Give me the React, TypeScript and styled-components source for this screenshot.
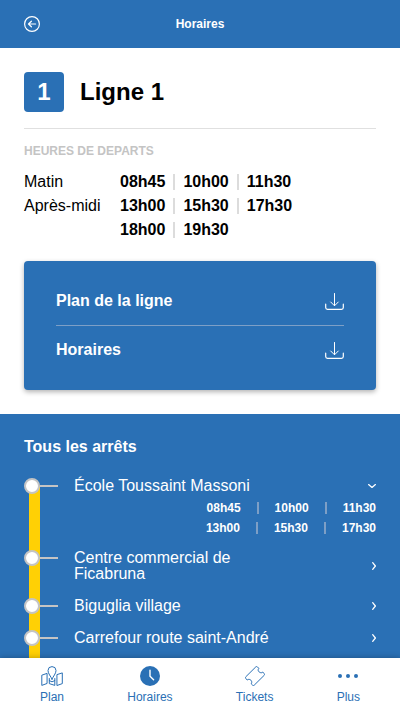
import React, { useState } from "react";
import styled, { createGlobalStyle } from "styled-components";

const blue = "#2a70b5";
const grey = "#c4c4c4";

const GlobalStyle = createGlobalStyle`
  *, *::before, *::after { box-sizing: border-box; }
  body { margin: 0; background: #fff; color: #000; font: 16px/24px "Liberation Sans", Arial, sans-serif; }
  h1, h2, ul, dl, dd { margin: 0; padding: 0; }
  ul { list-style: none; }
  button { margin: 0; padding: 0; border: 0; background: none; color: inherit; font: inherit; text-align: left; cursor: pointer; }
  a { color: inherit; text-decoration: none; }
  svg { display: block; flex: none; }
`;

const Screen = styled.div`
  display: flex;
  flex-direction: column;
  height: 100vh;
`;

const Header = styled.header`
  display: grid;
  grid-template-columns: 1fr auto 1fr;
  align-items: center;
  height: 48px;
  padding: 0 24px;
  flex: none;
  background: ${blue};
  color: #fff;
`;

const HeaderTitle = styled.span`
  font-size: 12px;
  font-weight: 700;
`;

const BackButton = styled.button`
  justify-self: start;
`;

const Content = styled.main`
  flex: 1;
  min-height: 0;
  overflow-y: auto;
  scrollbar-width: none;
`;

const Summary = styled.section`
  padding: 24px;
`;

const LineHeading = styled.div`
  display: flex;
  align-items: center;
  gap: 16px;
  padding-bottom: 16px;
  border-bottom: 1px solid #e0e0e0;
`;

const LineBadge = styled.span`
  display: grid;
  place-items: center;
  width: 40px;
  height: 40px;
  border-radius: 4px;
  background: ${blue};
  color: #fff;
  font-size: 24px;
  font-weight: 700;
`;

const LineName = styled.h1`
  font-size: 24px;
  line-height: 40px;
`;

const Caption = styled.h2`
  margin: 14px 0 11px;
  color: ${grey};
  font-size: 12px;
  line-height: 16px;
`;

const Departures = styled.dl`
  display: grid;
  grid-template-columns: 96px 1fr;
`;

const TimeRow = styled.ul<{ $compact?: boolean }>`
  display: flex;
  justify-content: ${(p) => (p.$compact ? "flex-end" : "flex-start")};
  font-size: ${(p) => (p.$compact ? 12 : 16)}px;
  line-height: ${(p) => (p.$compact ? 20 : 24)}px;
  font-weight: 700;

  li {
    display: flex;
    align-items: center;
  }
  li + li::before {
    content: "";
    width: 2px;
    height: ${(p) => (p.$compact ? 12 : 16)}px;
    margin: 0 ${(p) => (p.$compact ? 16 : 8)}px;
    background: ${(p) => (p.$compact ? "#7d9fc6" : "#dcdcdc")};
  }
`;

const DownloadCard = styled.ul`
  margin-top: 19px;
  padding: 16px 32px;
  border-radius: 4px;
  background: ${blue};
  color: #fff;
  box-shadow: 0 2px 5px rgba(0, 0, 0, 0.3);

  li + li {
    border-top: 1px solid #7d9fc6;
  }
`;

const DownloadButton = styled.button`
  display: flex;
  align-items: center;
  justify-content: space-between;
  width: 100%;
  height: 48px;
  font-weight: 700;
`;

const StopsSection = styled.section`
  padding: 25px 24px 0;
  background: ${blue};
  color: #fff;
`;

const StopsTitle = styled.h2`
  margin-bottom: 23px;
  font-size: 16px;
  line-height: 16px;
`;

const Stop = styled.li<{ $open: boolean; $first: boolean }>`
  position: relative;
  padding: 0 0 ${(p) => (p.$open ? 12 : 16)}px 50px;

  &::before {
    content: "";
    position: absolute;
    left: 5px;
    top: ${(p) => (p.$first ? 8 : 0)}px;
    bottom: 0;
    width: 11px;
    background: #ffd005;
  }
`;

const Marker = styled.span`
  position: absolute;
  left: 0;
  top: 0;
  width: 16px;
  height: 16px;
  border: 2px solid ${grey};
  border-radius: 50%;
  background: #fff;

  &::after {
    content: "";
    position: absolute;
    left: 14px;
    top: 5px;
    width: 18px;
    height: 2px;
    background: ${grey};
  }
`;

const StopButton = styled.button`
  display: flex;
  align-items: center;
  justify-content: space-between;
  width: 100%;
  line-height: 16px;
`;

const StopName = styled.span`
  max-width: 208px;
`;

const StopTimes = styled.div`
  padding-top: 4px;
`;

const TabBar = styled.nav`
  position: relative;
  display: flex;
  justify-content: space-between;
  flex: none;
  padding: 8px 40px 7px;
  background: #fff;
  color: ${blue};
  box-shadow: 0 0 6px rgba(0, 0, 0, 0.3);
`;

const Tab = styled.a`
  display: flex;
  flex-direction: column;
  align-items: center;
  gap: 3px;
  font-size: 12px;
  line-height: 16px;
`;

const BackIcon = () => (
  <svg width="16" height="16" viewBox="0 0 16 16" fill="none" stroke="currentColor" strokeLinecap="round" strokeLinejoin="round">
    <circle cx="8" cy="8" r="7.4" strokeWidth="1.2" />
    <path d="M11.6 8H4.6M7.4 5.200 4.500 8l2.900 2.800" strokeWidth="1.2" />
  </svg>
);

const DownloadIcon = () => (
  <svg width="19" height="17" viewBox="0 0 19 17" fill="none" stroke="currentColor" strokeLinecap="round" strokeLinejoin="round">
    <path d="M9.5.5V12.6M5.7 9l3.8 3.8L13.3 9" />
    <path d="M.7 11.2v3.3q0 1.8 1.8 1.8h14q1.8 0 1.8-1.8v-3.3" strokeWidth="1.2" />
  </svg>
);

const Chevron = ({ open }: { open: boolean }) =>
  open ? (
    <svg width="8" height="8" viewBox="0 0 8 8" fill="none" stroke="currentColor" strokeWidth="1.3" strokeLinecap="round" strokeLinejoin="round">
      <path d="M.6 2.6 4 5.4l3.4-2.8" />
    </svg>
  ) : (
    <svg width="4" height="8" viewBox="0 0 4 8" fill="none" stroke="currentColor" strokeWidth="1.3" strokeLinecap="round" strokeLinejoin="round">
      <path d="M.7.7 3.4 4 .7 7.3" />
    </svg>
  );

const MapIcon = () => (
  <svg width="22" height="20" viewBox="0 0 22 20" fill="none" stroke="currentColor" strokeLinejoin="round" strokeLinecap="round">
    <path d="M5.700 7.500.8 9.200v10.200l4.900-1.800z" />
    <path d="M16.300 8.500 21.300 6.900v10.700l-5 1.800z" />
    <path d="M8.300 12.500v5.100l5.500 1.800v-6.900M8.300 14.600l2.700 1.200 2.800-1.200" />
    <path d="M11 13.200C9.800 10.200 7 7.600 7 4.600a4 4 0 0 1 8 0c0 3-2.800 5.600-4 8.600z" />
  </svg>
);

const ClockIcon = () => (
  <svg width="20" height="20" viewBox="0 0 20 20" fill="none">
    <circle cx="10" cy="10" r="10" fill="currentColor" />
    <path d="M10 4.2V10.200l3.600 3.600" stroke="#fff" strokeWidth="1.4" strokeLinecap="round" />
  </svg>
);

const TicketIcon = () => (
  <svg width="20" height="20" viewBox="0 0 20 20" fill="none" stroke="currentColor" strokeLinejoin="round">
    <path d="M10.800.900q.8-.7 1.600 0l1.400 1.400c-1.100 1.500-.6 2.800.3 3.600s2.300 1.300 3.700.3l1.500 1.400q.7.8 0 1.600L9.200 19.200q-.8.7-1.600 0l-1.400-1.400c1-1.500.5-2.800-.3-3.600s-2.300-1.300-3.700-.3L.700 12.500q-.7-.8 0-1.600z" />
  </svg>
);

const DotsIcon = () => (
  <svg width="20" height="20" viewBox="0 0 20 20" fill="currentColor">
    <circle cx="2" cy="10" r="2" />
    <circle cx="10" cy="10" r="2" />
    <circle cx="18" cy="10" r="2" />
  </svg>
);

const Times = ({ times, compact }: { times: string[]; compact?: boolean }) => (
  <TimeRow $compact={compact}>
    {times.map((time) => (
      <li key={time}>{time}</li>
    ))}
  </TimeRow>
);

const stops: { name: string; times?: string[][] }[] = [
  {
    name: "École Toussaint Massoni",
    times: [
      ["08h45", "10h00", "11h30"],
      ["13h00", "15h30", "17h30"],
    ],
  },
  { name: "Centre commercial de Ficabruna" },
  { name: "Biguglia village" },
  { name: "Carrefour route saint-André" },
];

const tabs = [
  { label: "Plan", Icon: MapIcon },
  { label: "Horaires", Icon: ClockIcon },
  { label: "Tickets", Icon: TicketIcon },
  { label: "Plus", Icon: DotsIcon },
];

export default function App() {
  const [openStop, setOpenStop] = useState(0);

  return (
    <Screen>
      <GlobalStyle />
      <Header>
        <BackButton aria-label="Retour">
          <BackIcon />
        </BackButton>
        <HeaderTitle>Horaires</HeaderTitle>
      </Header>
      <Content>
        <Summary>
          <LineHeading>
            <LineBadge>1</LineBadge>
            <LineName>Ligne 1</LineName>
          </LineHeading>
          <Caption>HEURES DE DEPARTS</Caption>
          <Departures>
            <dt>Matin</dt>
            <dd>
              <Times times={["08h45", "10h00", "11h30"]} />
            </dd>
            <dt>Après-midi</dt>
            <dd>
              <Times times={["13h00", "15h30", "17h30"]} />
              <Times times={["18h00", "19h30"]} />
            </dd>
          </Departures>
          <DownloadCard>
            {["Plan de la ligne", "Horaires"].map((label) => (
              <li key={label}>
                <DownloadButton>
                  {label}
                  <DownloadIcon />
                </DownloadButton>
              </li>
            ))}
          </DownloadCard>
        </Summary>
        <StopsSection>
          <StopsTitle>Tous les arrêts</StopsTitle>
          <ul>
            {stops.map((stop, index) => {
              const open = openStop === index && !!stop.times;
              return (
                <Stop key={stop.name} $open={open} $first={index === 0}>
                  <Marker />
                  <StopButton aria-expanded={open} onClick={() => setOpenStop(openStop === index ? -1 : index)}>
                    <StopName>{stop.name}</StopName>
                    <Chevron open={open} />
                  </StopButton>
                  {open && (
                    <StopTimes>
                      {stop.times!.map((row) => (
                        <Times key={row[0]} times={row} compact />
                      ))}
                    </StopTimes>
                  )}
                </Stop>
              );
            })}
          </ul>
        </StopsSection>
      </Content>
      <TabBar>
        {tabs.map(({ label, Icon }) => (
          <Tab key={label} href={`#${label.toLowerCase()}`} aria-current={label === "Horaires" ? "page" : undefined}>
            <Icon />
            {label}
          </Tab>
        ))}
      </TabBar>
    </Screen>
  );
}
